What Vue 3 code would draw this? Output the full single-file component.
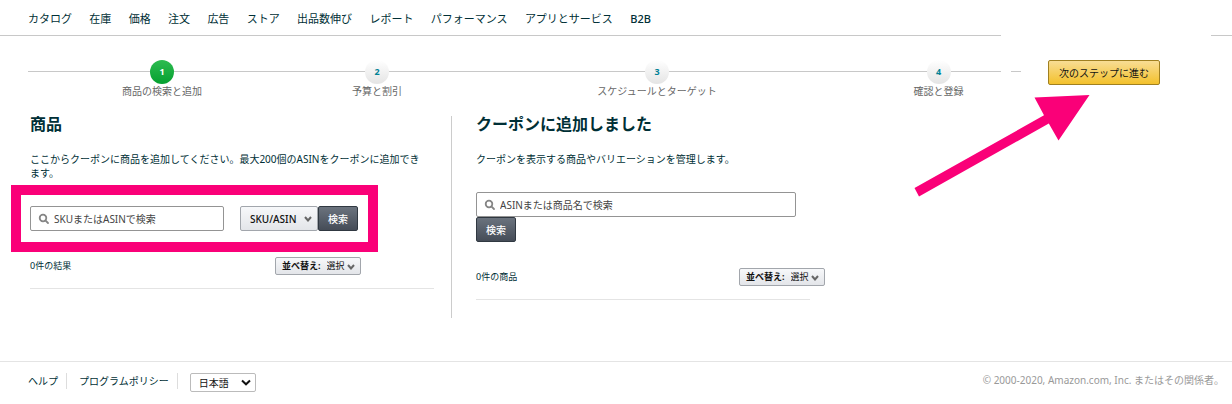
<template>
  <div class="page">
    <header class="header">
      <nav class="nav">
        <a v-for="item in navItems" :key="item" href="#" class="nav-link">{{ item }}</a>
      </nav>
      <div class="header-rule">
        <span class="rule-main"></span>
        <span class="rule-end"></span>
      </div>
    </header>

    <div class="progress">
      <ol class="steps">
        <li
          v-for="(step, index) in steps"
          :key="step"
          class="step"
          :class="{ active: index + 1 === currentStep }"
        >
          <span class="step-number">{{ index + 1 }}</span>
          <span class="step-label">{{ step }}</span>
        </li>
      </ol>
      <div class="actions">
        <button type="button" class="btn-primary">次のステップに進む</button>
        <svg class="arrow" viewBox="0 0 178 104" aria-hidden="true">
          <path d="M175.5 1L120.5 3.5L130 21.3L0.5 94L5 102.5L134.8 29.5L144.5 46.5Z" />
        </svg>
      </div>
    </div>

    <main class="content">
      <section class="panel">
        <h2 class="panel-title">商品</h2>
        <p class="panel-text">
          ここからクーポンに商品を追加してください。最大200個のASINをクーポンに追加できます。
        </p>
        <form class="search highlight" @submit.prevent>
          <label class="search-box search-product">
            <svg viewBox="0 0 12 12" class="search-icon" aria-hidden="true">
              <circle cx="5" cy="5" r="3.3" />
              <path d="M7.6 7.6L10 10" />
            </svg>
            <input
              v-model="productKeyword"
              type="text"
              placeholder="SKUまたはASINで検索"
              aria-label="SKUまたはASINで検索"
            />
          </label>
          <span class="select-box select-type">
            <select v-model="searchType" aria-label="検索対象">
              <option value="sku">SKU/ASIN</option>
            </select>
            <svg viewBox="0 0 8 7" class="chevron" aria-hidden="true">
              <path d="M1 2L4 5.5L7 2" />
            </svg>
          </span>
          <button type="submit" class="btn-dark">検索</button>
        </form>
        <div class="result-row">
          <span class="count">0件の結果</span>
          <label class="select-box sort">
            <span class="sort-label">並べ替え:</span>
            <select v-model="productSort">
              <option value="">選択</option>
            </select>
            <svg viewBox="0 0 8 7" class="chevron" aria-hidden="true">
              <path d="M1 2L4 5.5L7 2" />
            </svg>
          </label>
        </div>
      </section>

      <section class="panel panel-added">
        <h2 class="panel-title">クーポンに追加しました</h2>
        <p class="panel-text">クーポンを表示する商品やバリエーションを管理します。</p>
        <form class="search search-stacked" @submit.prevent>
          <label class="search-box search-added">
            <svg viewBox="0 0 12 12" class="search-icon" aria-hidden="true">
              <circle cx="5" cy="5" r="3.3" />
              <path d="M7.6 7.6L10 10" />
            </svg>
            <input
              v-model="addedKeyword"
              type="text"
              placeholder="ASINまたは商品名で検索"
              aria-label="ASINまたは商品名で検索"
            />
          </label>
          <button type="submit" class="btn-dark">検索</button>
        </form>
        <div class="result-row">
          <span class="count">0件の商品</span>
          <label class="select-box sort">
            <span class="sort-label">並べ替え:</span>
            <select v-model="addedSort">
              <option value="">選択</option>
            </select>
            <svg viewBox="0 0 8 7" class="chevron" aria-hidden="true">
              <path d="M1 2L4 5.5L7 2" />
            </svg>
          </label>
        </div>
      </section>
    </main>

    <footer class="footer">
      <div class="footer-links">
        <a href="#" class="footer-link">ヘルプ</a>
        <a href="#" class="footer-link">プログラムポリシー</a>
        <span class="select-box language">
          <select v-model="language" aria-label="言語">
            <option value="ja">日本語</option>
          </select>
          <svg viewBox="0 0 10 7" class="chevron" aria-hidden="true">
            <path d="M1 1.5L5 5.3L9 1.5" />
          </svg>
        </span>
      </div>
      <small class="copyright">© 2000-2020, Amazon.com, Inc. またはその関係者。</small>
    </footer>
  </div>
</template>

<script setup>
import { ref } from 'vue'

const navItems = [
  'カタログ',
  '在庫',
  '価格',
  '注文',
  '広告',
  'ストア',
  '出品数伸び',
  'レポート',
  'パフォーマンス',
  'アプリとサービス',
  'B2B'
]

const steps = ['商品の検索と追加', '予算と割引', 'スケジュールとターゲット', '確認と登録']
const currentStep = ref(1)

const productKeyword = ref('')
const searchType = ref('sku')
const productSort = ref('')
const addedKeyword = ref('')
const addedSort = ref('')
const language = ref('ja')
</script>

<style>
body {
  background: #fff;
}
</style>

<style scoped>
.page {
  font-family: 'Noto Sans', 'Noto Sans CJK JP', sans-serif;
  font-size: 10px;
  line-height: 14px;
  color: #002f36;
}

.page *,
.page *::after {
  box-sizing: border-box;
}

a {
  color: inherit;
  text-decoration: none;
}

button,
input,
select {
  font: inherit;
  margin: 0;
}

/* header */
.nav {
  display: flex;
  justify-content: space-between;
  max-width: 623px;
  height: 35px;
  align-items: center;
  margin-left: 28px;
  padding-top: 2px;
}

.nav-link {
  font-size: 11px;
  white-space: nowrap;
}

.nav-link:last-child {
  font-weight: 500;
}

.header-rule {
  display: flex;
  justify-content: space-between;
  gap: 210px;
}

.rule-main,
.rule-end {
  height: 1px;
  background: #c8c8c8;
}

.rule-main {
  flex: 1;
}

.rule-end {
  width: 21px;
}

/* progress */
.progress {
  display: flex;
  align-items: flex-start;
  padding: 24px 0 0 28px;
}

.steps {
  flex: 1;
  display: grid;
  grid-template-columns: 268fr 162fr 398fr 165fr;
  list-style: none;
  margin: 0;
  padding: 0;
}

.step {
  display: flex;
  flex-direction: column;
  align-items: center;
  color: #666;
  background: linear-gradient(#c8c8c8, #c8c8c8) 0 11px / 100% 1px no-repeat;
}

.step:last-child {
  background:
    linear-gradient(#c8c8c8, #c8c8c8) 0 11px / calc(100% - 20px) 1px no-repeat,
    linear-gradient(#c8c8c8, #c8c8c8) 100% 11px / 10px 1px no-repeat;
}

.step-number {
  width: 24px;
  height: 24px;
  border-radius: 50%;
  background: linear-gradient(#fff, #e4e4e4);
  color: #008296;
  font-size: 9px;
  font-weight: 700;
  line-height: 24px;
  text-align: center;
}

.step.active .step-number {
  background: linear-gradient(#2dbb50, #05a030);
  color: #fff;
}

.step-label {
  white-space: nowrap;
}

.actions {
  position: relative;
  width: 211px;
  padding-left: 27px;
}

.btn-primary {
  display: block;
  height: 25px;
  width: 112px;
  padding: 0;
  border: 1px solid #a08020;
  border-radius: 2px;
  background: linear-gradient(#f8dd94, #f3c12c);
  color: #111;
  white-space: nowrap;
}

.arrow {
  position: absolute;
  top: 34px;
  left: -107px;
  width: 178px;
  height: 104px;
  fill: #fa0078;
}

/* content */
.content {
  display: grid;
  grid-template-columns: 421fr 781fr;
  padding: 18px 0 0 30px;
}

.panel {
  padding-right: 17px;
}

.panel-title {
  margin: 0 0 20px;
  font-size: 16px;
  line-height: 16px;
  font-weight: 700;
}

.panel-text {
  margin: 0 0 26px;
  padding-right: 10px;
}

.panel-added {
  border-left: 1px solid #ccc;
  padding: 0 0 18px 24px;
}

.search {
  display: flex;
  width: fit-content;
  margin-bottom: 26px;
}

.search-stacked {
  flex-direction: column;
  align-items: flex-start;
}

.highlight {
  position: relative;
}

.highlight::after {
  content: '';
  position: absolute;
  inset: -21px -20px -21px -19px;
  border: 10px solid #fa0078;
  pointer-events: none;
}

.search-box {
  display: flex;
  align-items: center;
  gap: 4px;
  height: 25px;
  padding: 0 7px;
  border: 1px solid #949494;
  border-radius: 2px;
}

.search-product {
  width: 194px;
  margin-right: 16px;
}

.search-added {
  width: 320px;
}

.search-icon {
  width: 12px;
  height: 12px;
  flex-shrink: 0;
  fill: none;
  stroke: #858585;
  stroke-width: 1.8;
  stroke-linecap: round;
}

.search-box input {
  flex: 1;
  min-width: 0;
  padding: 0;
  border: none;
  outline: none;
  background: none;
}

.search-box input::placeholder {
  color: #444;
  opacity: 1;
}

.select-box {
  display: flex;
  align-items: center;
  position: relative;
  border: 1px solid #a2a6ac;
  border-radius: 2px;
  background: linear-gradient(#f7f8fa, #e3e5e9);
}

.select-box select {
  appearance: none;
  flex: 1;
  min-width: 0;
  height: 100%;
  padding: 0;
  border: none;
  outline: none;
  background: none;
  color: #111;
}

.chevron {
  position: absolute;
  right: 5px;
  width: 8px;
  height: 7px;
  fill: none;
  stroke: #666;
  stroke-width: 2;
  pointer-events: none;
}

.select-type {
  width: 78px;
  height: 25px;
}

.select-type select {
  padding-left: 9px;
  font-weight: 500;
}

.btn-dark {
  width: 40px;
  height: 25px;
  padding: 0;
  border: 1px solid #303841;
  border-radius: 2px;
  background: linear-gradient(#6b737e, #454c57);
  color: #fff;
  font-weight: 500;
}

.result-row {
  display: flex;
  align-items: center;
  justify-content: space-between;
  padding-bottom: 13px;
  border-bottom: 1px solid #e4e4e4;
}

.panel-added .result-row {
  max-width: 334px;
}

.count {
  font-size: 9px;
}

.sort {
  width: 86px;
  height: 18px;
  margin-right: 73px;
  padding-left: 6px;
  font-size: 9px;
}

.panel-added .sort {
  margin-right: -15px;
}

.sort-label {
  margin-right: 6px;
  font-weight: 700;
  color: #111;
}

/* footer */
.footer {
  display: flex;
  justify-content: space-between;
  align-items: flex-start;
  margin-top: 43px;
  padding: 11px 8px 0 28px;
  border-top: 1px solid #e4e4e4;
}

.footer-links {
  display: flex;
  align-items: flex-start;
}

.footer-link {
  height: 16px;
  padding-top: 1px;
  margin-right: 12px;
  padding-right: 8px;
  border-right: 1px solid #ddd;
}

.language {
  width: 66px;
  height: 19px;
  border-color: #bbb;
  background: #fff;
}

.language select {
  padding-left: 8px;
}

.language .chevron {
  right: 4px;
  width: 10px;
  stroke: #111;
}

.copyright {
  font-size: 10px;
  color: #999;
}
</style>
